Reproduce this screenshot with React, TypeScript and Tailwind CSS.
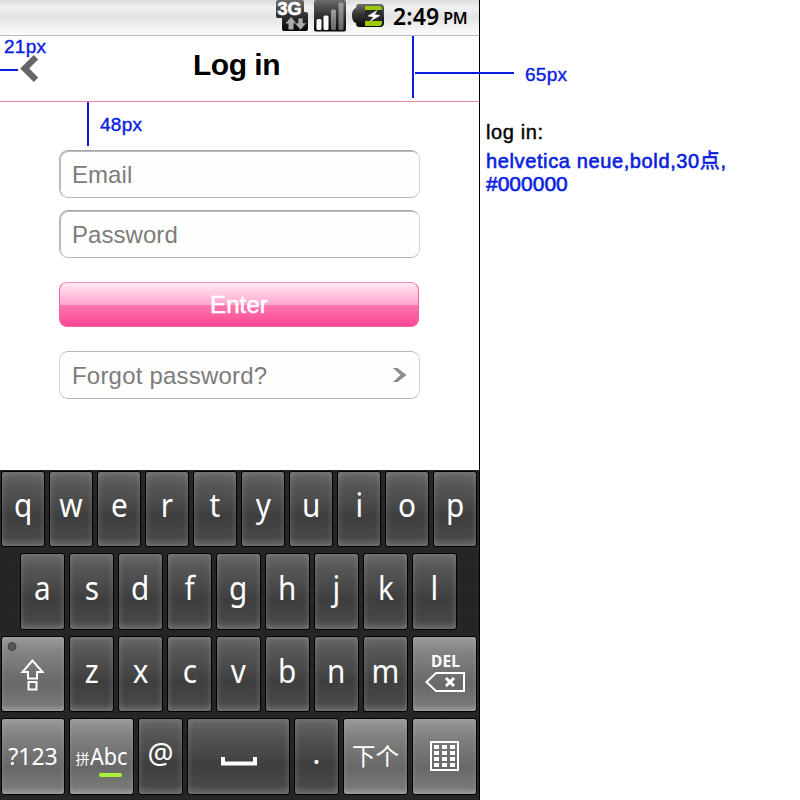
import React from "react";

const LIGHT =
  "bg-[linear-gradient(#9a9a9a_0%,#838383_20%,#737373_45%,#686868_65%,#7a7a7a_92%,#999_100%)] shadow-[inset_0_0_5px_rgba(190,190,190,0.35)]";
const DARK =
  "bg-[linear-gradient(#676767_0%,#555_20%,#484848_45%,#3e3e3e_60%,#474747_88%,#606060_100%)] shadow-[inset_0_0_6px_rgba(170,170,170,0.42)]";

function Key({
  width,
  light = false,
  children,
}: {
  width: string;
  light?: boolean;
  children?: React.ReactNode;
}) {
  return (
    <div
      className={`flex h-full shrink-0 items-start justify-center overflow-hidden rounded-[3px] border border-black text-white ${width} ${light ? LIGHT : DARK}`}
    >
      {children}
    </div>
  );
}

function Letters({
  chars,
  width,
  leading,
}: {
  chars: string;
  width: string;
  leading: string;
}) {
  return (
    <>
      {chars.split("").map((c) => (
        <Key key={c} width={width}>
          <span className={`scale-x-[0.9] text-[33px] ${leading}`}>{c}</span>
        </Key>
      ))}
    </>
  );
}

function StatusBar() {
  return (
    <div className="flex h-9 items-start border-b border-[#b9b9b9] bg-[linear-gradient(#dcdcdc_0%,#f1f1f1_22%,#e3e3e3_48%,#f4f4f4_80%,#fbfbfb_100%)] pl-[274px]">
      <svg width="112" height="34" viewBox="274 0 112 34" className="shrink-0">
        <defs>
          <linearGradient id="dk" x1="0" y1="0" x2="0" y2="1">
            <stop offset="0" stopColor="#6c6c6c" />
            <stop offset="0.5" stopColor="#303030" />
            <stop offset="1" stopColor="#060606" />
          </linearGradient>
          <linearGradient id="bar" x1="0" y1="0" x2="0" y2="1">
            <stop offset="0" stopColor="#a0a0a0" />
            <stop offset="1" stopColor="#666" />
          </linearGradient>
        </defs>
        <path d="M278 0h24a2 2 0 0 1 2 2v10h2a2 2 0 0 1 2 2v15a2 2 0 0 1-2 2h-22a2 2 0 0 1-2-2V18h-4a2 2 0 0 1-2-2V2a2 2 0 0 1 2-2z" fill="url(#dk)" />
        <text x="277.500" y="15" fontFamily="'Liberation Sans', Arial, sans-serif" fontWeight="700" fontSize="18" textLength="24" lengthAdjust="spacingAndGlyphs" fill="#fff" stroke="#fff" strokeWidth="0.7">3G</text>
        <path d="M291 17l5.500 6.500h-3v6h-5v-6h-3z" fill="#aaa" />
        <path d="M298 18h5v5h3.500l-6 7-6-7h3.500z" fill="#aaa" stroke="#222" strokeWidth="0.6" />
        <rect x="314" y="0" width="32" height="31.500" rx="2" fill="url(#dk)" />
        <rect x="316.500" y="19" width="5" height="11" rx="1.500" fill="#fff" />
        <rect x="323.500" y="15.500" width="5" height="14.500" rx="1.500" fill="#fff" />
        <rect x="331" y="9.500" width="5" height="20.500" rx="1.500" fill="url(#bar)" />
        <rect x="338.500" y="2.500" width="5" height="27.500" rx="1.500" fill="url(#bar)" />
        <path d="M359 4h21a4 4 0 0 1 4 4v15a4 4 0 0 1-4 4h-21q-3 0-3-4-4-1-4-7.500t4-7.500q0-4 3-4z" fill="url(#dk)" />
        <path d="M365 6h14q3 0 3 3v1h-17zM365 21h17v2q0 3-3 3h-14z" fill="#9acb00" />
        <path d="M365 10h17v11h-17z" fill="#292929" />
        <path d="M377 10.500l-9 5.500 5.500 1-3 4 9.500-5.500-5.500-1z" fill="#fff" stroke="#fff" strokeWidth="0.5" />
      </svg>
      <span className="ml-[7px] font-['Noto_Sans',sans-serif] text-[23px] leading-8 font-semibold tracking-[0.1px] text-black">
        2:49
      </span>
      <span className="ml-[4px] font-['Noto_Sans',sans-serif] text-[16px] leading-[37px] font-semibold tracking-[-0.2px] text-black">
        PM
      </span>
    </div>
  );
}

function Header() {
  return (
    <div className="flex h-[66px] items-start border-b border-[#f485b2]">
      <svg width="20" height="30" viewBox="0 0 20 30" className="mt-[17px] ml-[20px] shrink-0">
        <path d="M16 4.300L4.700 15.500 16 26.700" fill="none" stroke="#666" strokeWidth="6.300" />
      </svg>
      <h1 className="ml-[153px] text-[30px] leading-[58px] font-bold tracking-[-0.5px] text-black">
        Log in
      </h1>
    </div>
  );
}

function Field({ label }: { label: string }) {
  return (
    <div className="-mr-px h-12 rounded-[9px] border border-t-[#a5a5a5] border-r-[#d5d5d5] border-b-[#b8b8b8] border-l-[#b5b5b5] bg-[#fefefd] pl-[12px] text-2xl leading-[48px] tracking-[0.05px] text-[#7c7c7c] shadow-[inset_1px_1px_0_#bdbdbd]">
      {label}
    </div>
  );
}

function Form() {
  return (
    <div className="flex flex-col pt-12 pr-[60px] pl-[59px]">
      <Field label="Email" />
      <div className="h-3" />
      <Field label="Password" />
      <div className="mt-6 h-[45px] rounded-[8px] border border-[#fa62a2] border-t-[#ff8abd] bg-[linear-gradient(#ffeaf4_0%,#ffa6cf_50%,#ff78b1_50%,#f94892_100%)] text-center text-2xl leading-[44px] tracking-[0.1px] text-white [-webkit-text-stroke:0.5px_white]">
        Enter
      </div>
      <div className="mt-6 -mr-px flex h-12 items-start rounded-[9px] border border-x-[#d0d0d0] border-y-[#b8b8b8] bg-[#fefefd] pr-3 pl-[12px] text-2xl leading-[48px] tracking-[0.2px] text-[#7c7c7c]">
        <span>Forgot password?</span>
        <svg width="14" height="16" viewBox="0 0 14 16" className="mt-[15px] ml-auto">
          <path d="M0 1h4.500l9 7-9 7H0l7.500-7z" fill="#8c8c8c" />
        </svg>
      </div>
    </div>
  );
}

function Keyboard() {
  return (
    <div className="mt-auto flex h-[330px] flex-col gap-1.5 border-t border-[#222] bg-[#262626] bg-[radial-gradient(#202020_0.7px,transparent_0.8px)] bg-size-[3px_3px] pb-[5px] font-['Noto_Sans','Noto_Sans_CJK_SC',sans-serif]">
      <div className="flex h-[76px] gap-1 pl-px">
        <Letters chars="qwertyuiop" width="w-[44px]" leading="leading-[66px]" />
      </div>
      <div className="flex h-[77px] gap-1 pl-5">
        <Letters chars="asdfghjkl" width="w-[45px]" leading="leading-[68px]" />
      </div>
      <div className="flex h-[76px] gap-1 pl-px">
        <Key width="w-[64px]" light>
          <svg width="62" height="74" viewBox="2 637 62 74">
            <circle cx="12" cy="646.500" r="4" fill="#555" stroke="#444" />
            <path d="M32.500 660.500l-10 11.500h5.500v6.500h9V672h5.500zM28.500 682h8v7.500h-8z" fill="none" stroke="#fff" strokeWidth="2" />
          </svg>
        </Key>
        <Letters chars="zxcvbnm" width="w-[45px]" leading="leading-[67px]" />
        <Key width="w-[65px]" light>
          <div className="flex flex-col items-center">
            <span className="mt-[14px] ml-[2px] text-[15.5px] leading-5 font-bold tracking-[0.1px]">DEL</span>
            <svg width="40" height="22" viewBox="0 0 40 22">
              <path d="M1.500 11L11 2h28v18H11z" fill="none" stroke="#fff" strokeWidth="2" />
              <path d="M21 7l8 8M29 7l-8 8" stroke="#fff" strokeWidth="3" />
            </svg>
          </div>
        </Key>
      </div>
      <div className="flex h-[77px] gap-1 pl-px">
        <Key width="w-[64px]" light>
          <span className="text-[23px] leading-[74px]">?123</span>
        </Key>
        <Key width="w-[65px]" light>
          <div className="flex flex-col">
            <div className="flex h-[53px] items-start">
              <span className="text-[14px] leading-[80px]">拼</span>
              <span className="w-[38px] origin-left scale-x-[0.9] text-[24px] leading-[74px]">Abc</span>
            </div>
            <div className="mt-px ml-[23px] h-[4px] w-[23px] rounded-full bg-[#aaf03c] shadow-[0_0_1px_#65a800]" />
          </div>
        </Key>
        <Key width="w-[45px]">
          <span className="text-[29px] leading-[68px]">@</span>
        </Key>
        <Key width="w-[103px]">
          <svg width="36" height="9" viewBox="0 0 36 9" className="mt-[38px]">
            <path d="M2 0v6.500h32V0" fill="none" stroke="#fff" strokeWidth="4" />
          </svg>
        </Key>
        <Key width="w-[45px]">
          <span className="text-[31px] leading-[66px]">.</span>
        </Key>
        <Key width="w-[65px]" light>
          <span className="font-['Noto_Sans_CJK_SC',sans-serif] text-[23.5px] leading-[73px] font-normal">下个</span>
        </Key>
        <Key width="w-[65px]" light>
          <svg width="29" height="30" viewBox="0 0 29 30" className="mt-[22px] -ml-px">
            <rect x="1" y="1" width="27" height="28" fill="none" stroke="#fff" strokeWidth="2" />
            {[4, 10, 16, 22].map((y) =>
              [4, 12, 20].map((x) => (
                <rect key={`${x}-${y}`} x={x} y={y} width="5" height="4" fill="#fff" />
              )),
            )}
          </svg>
        </Key>
      </div>
    </div>
  );
}

const LABEL =
  "absolute text-[19px] leading-none tracking-[0.3px] text-[#0a1ee0] [-webkit-text-stroke:0.4px_#0a1ee0]";

function Annotations() {
  return (
    <>
      <span className={`${LABEL} top-[37px] left-[4px]`}>21px</span>
      <div className="absolute top-[69px] left-0 h-[2px] w-[18px] bg-[#0a1ee0]" />
      <div className="absolute top-[102px] left-[87px] h-[44px] w-[2px] bg-[#0a1ee0]" />
      <span className={`${LABEL} top-[115px] left-[100px]`}>48px</span>
      <div className="absolute top-[36px] left-[412px] h-[62px] w-[2px] bg-[#0a1ee0]" />
      <div className="absolute top-[72px] left-[415px] h-[2px] w-[99px] bg-[#0a1ee0]" />
      <span className={`${LABEL} top-[65px] left-[525px]`}>65px</span>
    </>
  );
}

export default function App() {
  return (
    <div className="relative flex h-[800px] w-[800px] overflow-hidden bg-white font-['Liberation_Sans',Arial,sans-serif]">
      <div className="flex h-full w-[480px] shrink-0 flex-col border-r border-black">
        <StatusBar />
        <Header />
        <Form />
        <Keyboard />
      </div>
      <div className="flex flex-col pt-[120px] pl-[6px] font-['Liberation_Sans','Noto_Sans_CJK_SC',sans-serif] text-[20px] leading-6 whitespace-nowrap">
        <p className="tracking-[0.6px] text-black [-webkit-text-stroke:0.4px_black]">log in:</p>
        <p className="mt-[5px] h-[23px] tracking-[0.62px] text-[#0a1ee0] [-webkit-text-stroke:0.6px_#0a1ee0]">
          helvetica neue,bold,30点,
        </p>
        <p className="text-[21px] text-[#0a1ee0] [-webkit-text-stroke:0.6px_#0a1ee0]">#000000</p>
      </div>
      <Annotations />
    </div>
  );
}
